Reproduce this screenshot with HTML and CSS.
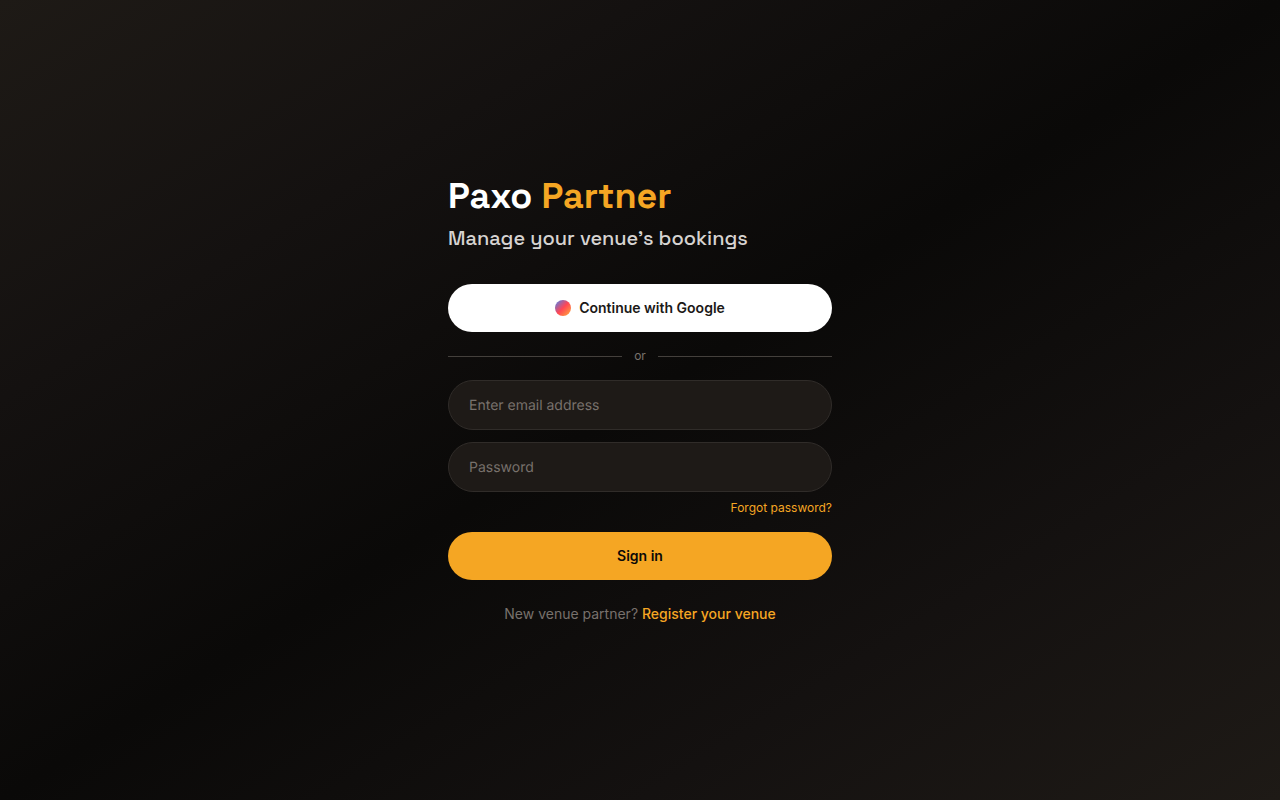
FILE: index.html
```html
<!DOCTYPE html>
<html lang="en">
<head>
<meta charset="utf-8">
<meta name="viewport" content="width=device-width, initial-scale=1">
<title>Paxo Partner</title>
<link rel="stylesheet" href="styles.css">
</head>
<body>
<main class="login">
  <header class="brand">
    <h1 class="brand-title">Paxo <span class="accent">Partner</span></h1>
    <p class="brand-tagline">Manage your venue’s bookings</p>
  </header>
  <button class="button button-google" type="button"><span class="google-dot"></span>Continue with Google</button>
  <div class="divider"><span>or</span></div>
  <form class="form">
    <input class="field" type="email" placeholder="Enter email address" aria-label="Email address">
    <input class="field" type="password" placeholder="Password" aria-label="Password">
    <a class="forgot" href="#">Forgot password?</a>
    <button class="button button-primary" type="submit">Sign in</button>
  </form>
  <p class="register">New venue partner? <a href="#">Register your venue</a></p>
</main>
</body>
</html>
```
FILE: styles.css
```css
* { box-sizing: border-box; }
body {
  margin: 0;
  min-height: 100vh;
  display: flex;
  align-items: center;
  justify-content: center;
  padding: 24px;
  background: linear-gradient(to bottom right, #1e1a16 0%, #141110 25%, #0a0908 50%, #141110 75%, #1e1a16 100%);
  color: #fff;
  font-family: Inter, "Liberation Sans", sans-serif;
  font-size: 14px;
  line-height: 20px;
}
a { color: #f5a623; text-decoration: none; }
.login { width: 100%; max-width: 384px; }
.brand {
  margin-bottom: 32px;
  font-family: "Space Grotesk", Inter, sans-serif;
}
.brand-title { margin: 0 0 8px; font-size: 36px; line-height: 40px; font-weight: 700; }
.accent { color: #f5a623; }
.brand-tagline { margin: 0; font-size: 20px; line-height: 28px; font-weight: 500; color: #d6d3d1; }
.button {
  display: flex;
  align-items: center;
  justify-content: center;
  gap: 8px;
  width: 100%;
  height: 48px;
  border: 0;
  border-radius: 24px;
  font: 600 14px/20px Inter, sans-serif;
  color: #1c1917;
  cursor: pointer;
}
.button-google { background: #fff; }
.button-primary { background: #f5a623; color: #0a0908; }
.google-dot {
  width: 16px;
  height: 16px;
  border-radius: 50%;
  background: linear-gradient(135deg, #4285f4, #ff4655 50%, #ffb03a);
}
.divider {
  display: flex;
  align-items: center;
  gap: 12px;
  margin: 16px 0;
  font-size: 12px;
  line-height: 16px;
  color: #78716c;
}
.divider::before, .divider::after { content: ""; flex: 1; height: 1px; background: #44403c; }
.form { display: flex; flex-direction: column; }
.field {
  width: 100%;
  height: 50px;
  margin-bottom: 12px;
  padding: 0 20px;
  border: 1px solid #302c29;
  border-radius: 25px;
  background: #1e1a17;
  color: #fff;
  font: 400 14px Inter, sans-serif;
  text-rendering: geometricPrecision;
}
.field::placeholder { color: #78716c; opacity: 1; }
.forgot { align-self: flex-end; margin: -4px 0 16px; font-size: 12px; line-height: 16px; }
.register { margin: 24px 0 0; text-align: center; color: #78716c; }
.register a { font-weight: 500; }
```
